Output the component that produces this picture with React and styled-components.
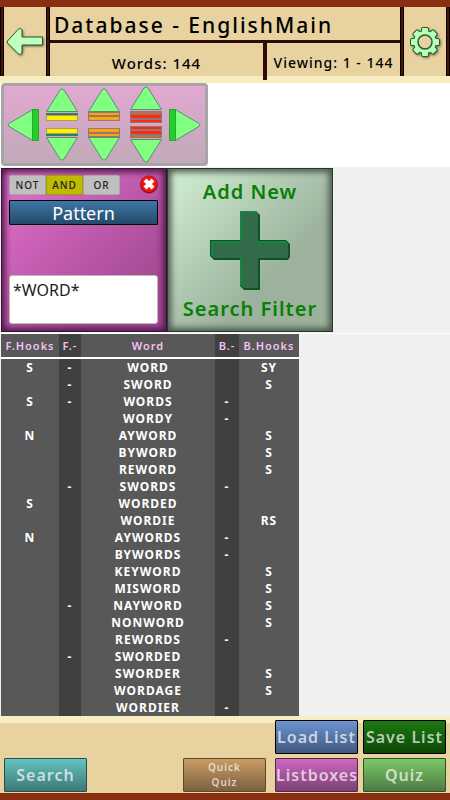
import React from 'react';
import styled, { createGlobalStyle } from 'styled-components';

const GlobalStyle = createGlobalStyle`
    *{
        box-sizing: border-box;
    }

    body{
        margin: 0;
        background-color: #fff;
        font-family: "Noto Sans", sans-serif;
        color: #000;
    }

    button, textarea{
        font-family: inherit;
        margin: 0;
    }
`
const Page = styled.div`
    display: flex;
    flex-direction: column;
    height: 100vh;
    overflow: hidden;
`
const Header = styled.header`
    display: flex;
    height: 83px;
    flex: none;
    border-top: 7px solid #8a3012;
    background: linear-gradient(#e8d2a0 69px, #f8ecc2 69px);
`
const Post = styled.div`
    width: 4px;
    height: 69px;
    flex: none;
    background-color: #4a1505;
    border: solid #000;
    border-width: 0 1px;
`
const IconButton = styled.button`
    display: flex;
    align-items: center;
    justify-content: center;
    width: 42px;
    height: 69px;
    flex: none;
    padding: 0;
    border: none;
    background: none;
    cursor: pointer;

    svg{
        filter: drop-shadow(1px 1px 1px rgba(0,0,0,0.5));
    }
`
const HeaderMain = styled.div`
    flex: 1;
    min-width: 0;
`
const Title = styled.h1`
    height: 36px;
    margin: 0;
    padding-left: 4px;
    border-bottom: 3px solid #300a08;
    font-size: 21px;
    font-weight: 500;
    line-height: 36px;
    letter-spacing: 2px;
    white-space: nowrap;
`
const Stats = styled.div`
    display: flex;
    height: 37px;
    font-size: 14px;
    font-weight: 500;
    letter-spacing: 1px;
    line-height: 40px;
    text-align: center;
    white-space: nowrap;
`
const WordCount = styled.div`
    flex: 1;
    border-right: 4px solid #300a08;
    font-size: 15px;
`
const Viewing = styled.div`
    width: 133px;
`
const Content = styled.main`
    flex: 1;
    min-height: 0;
    overflow: hidden;
`
const Pager = styled.nav`
    display: flex;
    align-items: center;
    justify-content: space-between;
    width: 207px;
    height: 83px;
    margin-left: 1px;
    padding: 0 4px 0 3px;
    border: 3px solid #a8a5a8;
    border-radius: 4px;
    background: linear-gradient(#e2a8d2, #c0aab8);
`
const PagerSteps = styled.div`
    display: flex;
    gap: 10px;
    align-items: center;
`
const PagerColumn = styled.div`
    display: flex;
    flex-direction: column;
    align-items: center;
    gap: ${({ $gap }) => $gap}px;
`
const PagerButton = styled.button`
    display: block;
    padding: 0;
    border: none;
    background: none;
    cursor: pointer;

    svg{
        display: block;
        transform: ${({ $turn }) => ($turn ? `rotate(${$turn}deg)` : 'none')};
    }
`
const Filters = styled.section`
    display: flex;
    height: 168px;
    padding: 1px 0 1px 1px;
    border: solid #fff;
    border-width: 1px 0;
    background-color: #f0f0f0;
`
const FilterCard = styled.div`
    display: flex;
    flex-direction: column;
    width: 166px;
    height: 164px;
    padding: 6px 8px 7px 7px;
    background: linear-gradient(135deg, #dc6cc6 10%, #a84c98 75%);
    border: 1px solid #3c1038;
    box-shadow: inset 0 0 6px 3px #4c1846;
`
const FilterTop = styled.div`
    display: flex;
    align-items: flex-start;
    justify-content: space-between;
`
const Operators = styled.div`
    display: flex;
`
const Operator = styled.button`
    width: 37px;
    height: 20px;
    padding: 0;
    border: 1px solid ${({ $active }) => ($active ? '#a09c00' : '#a8a8a8')};
    border-radius: 2px;
    background-color: ${({ $active }) => ($active ? '#bfbb00' : '#bfbfbf')};
    color: #222;
    font-size: 10px;
    font-weight: 500;
    letter-spacing: 1px;
`
const CloseButton = styled.button`
    padding: 0;
    border: none;
    background: none;
    cursor: pointer;

    svg{
        display: block;
    }
`
const FilterType = styled.button`
    height: 25px;
    margin-top: 5px;
    padding: 0;
    border: 1px solid #000;
    border-radius: 1px;
    background: linear-gradient(#3f77a6, #24496a);
    color: #fff;
    font-size: 18px;
    line-height: 20px;
`
const PatternInput = styled.textarea`
    width: 100%;
    height: 49px;
    margin-top: auto;
    padding: 3px;
    border: 1px solid #bbb;
    border-radius: 3px;
    background-color: #fff;
    color: #222;
    font-size: 16px;
    line-height: 22px;
    resize: none;
    outline: none;
`
const AddFilter = styled.button`
    display: flex;
    flex-direction: column;
    align-items: center;
    justify-content: space-between;
    width: 166px;
    height: 164px;
    padding: 9px 0;
    border: 1px solid #28382c;
    background: linear-gradient(135deg, #cce8ce 8%, #9cb29c 65%);
    box-shadow: inset 0 0 6px 3px #48584b;
    color: #088008;
    font-size: 20px;
    font-weight: 600;
    line-height: 27px;
    letter-spacing: 1px;
    cursor: pointer;
`
const TableArea = styled.section`
    background-color: #f0f0f0;
`
const WordTable = styled.table`
    width: 298px;
    margin-left: 1px;
    table-layout: fixed;
    border-collapse: collapse;
    color: #fff;
    font-size: 12px;
    font-weight: 700;
    letter-spacing: 1px;
    text-align: center;
`
const HeadRow = styled.tr`
    height: 24px;
    border-bottom: 2px solid #fff;
    color: #f5c2f3;
    font-size: 11px;
`
const HeadCell = styled.th`
    width: ${({ $width }) => $width}px;
    padding: 0;
    background-color: ${({ $dark }) => ($dark ? '#404040' : '#585858')};
    font-weight: 600;
    line-height: 22px;
    white-space: nowrap;
`
const Cell = styled.td`
    height: 17px;
    padding: 0;
    background-color: ${({ $dark }) => ($dark ? '#404040' : '#585858')};
    line-height: 17px;
`
const Footer = styled.footer`
    display: flex;
    align-items: flex-end;
    justify-content: space-between;
    height: 84px;
    flex: none;
    padding: 0 4px 1px;
    border-bottom: 7px solid #8a3012;
    background: linear-gradient(#f8ecc2 7px, #e8d2a0 7px);
`
const FooterGrid = styled.div`
    display: grid;
    grid-template-columns: 87px 83px 83px;
    gap: 4px 5px;
`
const FooterButton = styled.button`
    width: 83px;
    height: 34px;
    padding: 0;
    border: 1px solid ${({ $border }) => $border || '#000'};
    border-radius: 1px;
    background: ${({ $from, $to }) => `linear-gradient(${$from}, ${$to})`};
    color: rgba(255,255,255,0.7);
    font-size: ${({ $small }) => ($small ? 10 : 16)}px;
    font-weight: 600;
    line-height: ${({ $small }) => ($small ? 15 : 24)}px;
    letter-spacing: 1px;
    white-space: nowrap;
    cursor: pointer;
`

const words = [
    ['S', '-', 'WORD', '', 'SY'],
    ['', '-', 'SWORD', '', 'S'],
    ['S', '-', 'WORDS', '-', ''],
    ['', '', 'WORDY', '-', ''],
    ['N', '', 'AYWORD', '', 'S'],
    ['', '', 'BYWORD', '', 'S'],
    ['', '', 'REWORD', '', 'S'],
    ['', '-', 'SWORDS', '-', ''],
    ['S', '', 'WORDED', '', ''],
    ['', '', 'WORDIE', '', 'RS'],
    ['N', '', 'AYWORDS', '-', ''],
    ['', '', 'BYWORDS', '-', ''],
    ['', '', 'KEYWORD', '', 'S'],
    ['', '', 'MISWORD', '', 'S'],
    ['', '-', 'NAYWORD', '', 'S'],
    ['', '', 'NONWORD', '', 'S'],
    ['', '', 'REWORDS', '-', ''],
    ['', '-', 'SWORDED', '', ''],
    ['', '', 'SWORDER', '', 'S'],
    ['', '', 'WORDAGE', '', 'S'],
    ['', '', 'WORDIER', '-', ''],
];

const columns = [
    { name: 'F.Hooks', width: 58 },
    { name: 'F.-', width: 22, dark: true },
    { name: 'Word', width: 134 },
    { name: 'B.-', width: 24, dark: true },
    { name: 'B.Hooks', width: 60 },
];

// bars under each arrow: [y, height, fill, outline]
const steps = [
    { label: 'one page', gap: 7, height: 33, bars: [[25, 1, '#d8c8e0', '#308060'], [27, 5, '#ffee00', '#a8a060']] },
    { label: 'five pages', gap: 7, height: 33, bars: [[24, 3, '#ffa010', '#907a70'], [28, 4, '#ffa010', '#907a70']] },
    { label: 'ten pages', gap: 3, height: 37, bars: [[25, 2, '#e06030', '#907a70'], [28, 4, '#ff2818', '#907a70'], [33, 3, '#ff2818', '#907a70']] },
];

const StepIcon = ({ height, bars }) => (
    <svg width="32" height={height} viewBox={`0 0 32 ${height}`}>
        <path d="M0.5 23.5L14 2Q16 -0.5 18 2L31.5 23.5Z" fill="#80ff80" stroke="#5a8a72" />
        {bars.map(([y, h, fill, outline]) => (
            <rect key={y} x="0.5" y={y + 0.5} width="31" height={h} fill={fill} stroke={outline} />
        ))}
    </svg>
);

const EndIcon = () => (
    <svg width="32" height="34" viewBox="0 0 32 34">
        <path d="M25.5 1.5L2 15.5Q0 17 2 18.5L25.5 32.5Z" fill="#80ff80" stroke="#5a8a72" />
        <rect x="25.5" y="1.5" width="6" height="31" fill="#22d022" stroke="#30a040" />
    </svg>
);

const BackIcon = () => (
    <svg width="38" height="30" viewBox="0 0 38 30">
        <path d="M1.5 14L12 2.5Q15 0 16 4V10H36.5V18H16V25Q15 29 12 26.5L1.5 16Q1 15 1.5 14Z" fill="#c0ffc0" stroke="#205c28" />
    </svg>
);

const angles = [0, 45, 90, 135, 180, 225, 270, 315];

const GearIcon = () => (
    <svg width="34" height="34" viewBox="-17 -17 34 34">
        {angles.map((angle) => (
            <rect key={angle} x="-4" y="-15" width="8" height="8" rx="2" fill="#206030" transform={`rotate(${angle})`} />
        ))}
        <circle r="12" fill="#206030" />
        <circle r="11" fill="#b8ffb8" />
        {angles.map((angle) => (
            <rect key={angle} x="-3" y="-14" width="6" height="6" rx="1" fill="#b8ffb8" transform={`rotate(${angle})`} />
        ))}
        <circle r="7" fill="#e8d2a0" stroke="#206030" strokeWidth="1.5" />
    </svg>
);

const CloseIcon = () => (
    <svg width="18" height="19" viewBox="0 0 18 19">
        <circle cx="9" cy="9.5" r="9" fill="#a80808" />
        <circle cx="9" cy="9" r="8" fill="#e81818" />
        <path d="M5 5L13 13M13 5L5 13" stroke="#fff" strokeWidth="4" />
    </svg>
);

const PlusIcon = () => (
    <svg width="80" height="80" viewBox="0 0 80 80">
        <path d="M30 1H46L50 5V30H76L80 34V47L78 50H50V80H34L30 76V50H4L0 46V30H30Z" fill="#0c5222" />
        <path d="M30 1H46L48 4V31H76L78 34V48H48V78H34L30 75V48H4L1 45V31H30Z" fill="#16843f" />
        <path d="M32 3H46L48 6V33H76L78 35V48H48V78H34L32 75V48H5L3 45V33H32Z" fill="#326b49" />
    </svg>
);

const App = () => {
    return (
        <Page>
            <GlobalStyle />
            <Header>
                <Post />
                <IconButton type="button" aria-label="Back"><BackIcon /></IconButton>
                <Post />
                <HeaderMain>
                    <Title>Database - EnglishMain</Title>
                    <Stats>
                        <WordCount>Words: 144</WordCount>
                        <Viewing>Viewing: 1 - 144</Viewing>
                    </Stats>
                </HeaderMain>
                <Post />
                <IconButton type="button" aria-label="Settings"><GearIcon /></IconButton>
                <Post />
            </Header>
            <Content>
                <Pager aria-label="Pages">
                    <PagerButton type="button" aria-label="First page"><EndIcon /></PagerButton>
                    <PagerSteps>
                        {steps.map(({ label, gap, height, bars }) => (
                            <PagerColumn key={label} $gap={gap}>
                                <PagerButton type="button" aria-label={`Back ${label}`}>
                                    <StepIcon height={height} bars={bars} />
                                </PagerButton>
                                <PagerButton type="button" aria-label={`Forward ${label}`} $turn={180}>
                                    <StepIcon height={height} bars={bars} />
                                </PagerButton>
                            </PagerColumn>
                        ))}
                    </PagerSteps>
                    <PagerButton type="button" aria-label="Last page" $turn={180}><EndIcon /></PagerButton>
                </Pager>
                <Filters>
                    <FilterCard>
                        <FilterTop>
                            <Operators>
                                <Operator type="button">NOT</Operator>
                                <Operator type="button" $active>AND</Operator>
                                <Operator type="button">OR</Operator>
                            </Operators>
                            <CloseButton type="button" aria-label="Remove filter"><CloseIcon /></CloseButton>
                        </FilterTop>
                        <FilterType type="button">Pattern</FilterType>
                        <PatternInput aria-label="Pattern" defaultValue="*WORD*" spellCheck={false} />
                    </FilterCard>
                    <AddFilter type="button">
                        <span>Add New</span>
                        <PlusIcon />
                        <span>Search Filter</span>
                    </AddFilter>
                </Filters>
                <TableArea>
                    <WordTable>
                        <thead>
                            <HeadRow>
                                {columns.map(({ name, width, dark }) => (
                                    <HeadCell key={name} $width={width} $dark={dark}>{name}</HeadCell>
                                ))}
                            </HeadRow>
                        </thead>
                        <tbody>
                            {words.map((row) => (
                                <tr key={row[2]}>
                                    {row.map((value, i) => (
                                        <Cell key={columns[i].name} $dark={columns[i].dark}>{value}</Cell>
                                    ))}
                                </tr>
                            ))}
                        </tbody>
                    </WordTable>
                </TableArea>
            </Content>
            <Footer>
                <FooterButton type="button" $from="#64c4c0" $to="#3c7875" $border="#24504c">Search</FooterButton>
                <FooterGrid>
                    <span />
                    <FooterButton type="button" $from="#6c94d0" $to="#405880">Load List</FooterButton>
                    <FooterButton type="button" $from="#1c7810" $to="#0c4808">Save List</FooterButton>
                    <FooterButton type="button" $small $from="#c89c64" $to="#7c6040" $border="#5c4828">Quick<br />Quiz</FooterButton>
                    <FooterButton type="button" $from="#cc68c0" $to="#7c4074" $border="#502848">Listboxes</FooterButton>
                    <FooterButton type="button" $from="#7cc868" $to="#4c7c44" $border="#305028">Quiz</FooterButton>
                </FooterGrid>
            </Footer>
        </Page>
    );
};

export default App;
